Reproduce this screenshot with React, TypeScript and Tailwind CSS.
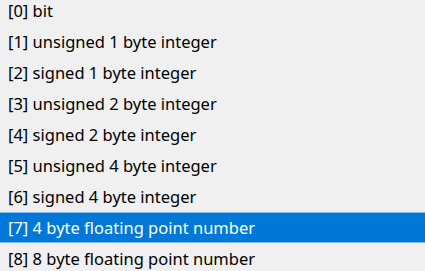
import React from 'react';

const items = [
  '[0] bit',
  '[1] unsigned 1 byte integer',
  '[2] signed 1 byte integer',
  '[3] unsigned 2 byte integer',
  '[4] signed 2 byte integer',
  '[5] unsigned 4 byte integer',
  '[6] signed 4 byte integer',
  '[7] 4 byte floating point number',
  '[8] 8 byte floating point number',
];

export default function App() {
  const selected = 7;
  return (
    <div className="w-[425px] h-[271px] overflow-hidden bg-[#f0f0f0] font-['Noto_Sans',sans-serif] text-[16.5px] leading-[20px] text-black">
      <ul className="-mt-[5px]">
        {items.map((label, i) => (
          <li
            key={i}
            className={
              i === selected
                ? 'h-[31px] flex items-center pl-[8px] bg-[#0078d7] text-white border-y border-[#7fbcef]'
                : 'h-[31px] flex items-center pl-[8px]'
            }
          >
            {label}
          </li>
        ))}
      </ul>
    </div>
  );
}
